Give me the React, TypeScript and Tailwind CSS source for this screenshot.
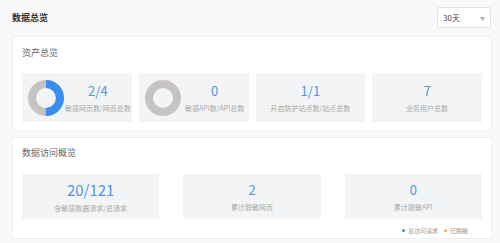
import React from 'react';

const font = { fontFamily: '"Noto Sans CJK SC", "Noto Sans", sans-serif' };

function Donut({ percent }: { percent: number }) {
  const r = 14;
  const c = 2 * Math.PI * r;
  return (
    <svg width="36" height="36" viewBox="0 0 36 36" className="shrink-0">
      <circle cx="18" cy="18" r={r} fill="none" stroke="#c7c3c3" strokeWidth="8" />
      {percent > 0 && (
        <circle
          cx="18"
          cy="18"
          r={r}
          fill="none"
          stroke="#3a8ef2"
          strokeWidth="8"
          strokeDasharray={`${c * percent} ${c}`}
          transform="rotate(-90 18 18)"
        />
      )}
    </svg>
  );
}

function Stat({ value, label, big }: { value: string; label: string; big?: boolean }) {
  return (
    <div className="flex flex-col items-center">
      <div className={`${big ? 'text-[15px]' : 'text-[13px]'} leading-none text-[#5595de]`}>{value}</div>
      <div className="mt-[8px] text-[7px] leading-none text-[#a8a8a8] whitespace-nowrap">{label}</div>
    </div>
  );
}

export default function App() {
  return (
    <div className="w-[500px] h-[243px] bg-[#f9f9fb] overflow-hidden" style={font}>
      {/* Header */}
      <div className="flex items-center justify-between h-[36px] pl-[12px] pr-[9px]">
        <div className="text-[9px] font-bold text-[#333]">数据总览</div>
        <div className="flex items-center justify-between w-[54px] h-[21px] mb-[1px] bg-white border border-[#e4e4e4] rounded-[2px] px-[5px]">
          <span className="text-[8px] text-[#444]">30天</span>
          <span className="text-[5px] text-[#aaa]">▼</span>
        </div>
      </div>

      {/* 资产总览 */}
      <div className="mx-[12px] w-[480px] h-[95px] bg-white border border-[#f0f0f3] rounded-[2px] px-[9px] pt-[11px]">
        <div className="text-[9px] leading-[10px] text-[#666]">资产总览</div>
        <div className="grid grid-cols-4 gap-[7px] mt-[15px]">
          <div className="h-[49px] bg-[#f3f4f6] flex items-center pl-[6px]">
            <Donut percent={0.5} />
            <div className="flex-1 flex justify-center">
              <Stat value="2/4" label="敏感网页数/网页总数" />
            </div>
          </div>
          <div className="h-[49px] bg-[#f3f4f6] flex items-center pl-[6px]">
            <Donut percent={0} />
            <div className="flex-1 flex justify-center">
              <Stat value="0" label="敏感API数/API总数" />
            </div>
          </div>
          <div className="h-[49px] bg-[#f3f4f6] flex items-center justify-center">
            <Stat value="1/1" label="开启防护站点数/站点总数" />
          </div>
          <div className="h-[49px] bg-[#f3f4f6] flex items-center justify-center">
            <Stat value="7" label="业务用户总数" />
          </div>
        </div>
      </div>

      {/* 数据访问概览 */}
      <div className="mx-[12px] mt-[6px] w-[480px] h-[102px] bg-white border border-[#f0f0f3] rounded-[2px] px-[9px] pt-[10px]">
        <div className="text-[9px] leading-[10px] text-[#666]">数据访问概览</div>
        <div className="grid grid-cols-3 gap-[24px] mt-[16px]">
          <div className="h-[45px] bg-[#f3f4f6] flex items-center justify-center">
            <Stat value="20/121" label="含敏感数据请求/总请求" big />
          </div>
          <div className="h-[45px] bg-[#f3f4f6] flex items-center justify-center">
            <Stat value="2" label="累计脱敏网页" />
          </div>
          <div className="h-[45px] bg-[#f3f4f6] flex items-center justify-center">
            <Stat value="0" label="累计脱敏API" />
          </div>
        </div>
        <div className="flex justify-end items-center gap-[6px] mt-[7px] pr-[14px] text-[6px] text-[#999]">
          <div className="flex items-center gap-[3px]">
            <span className="w-[3px] h-[3px] rounded-full bg-[#3a8ef2]" />
            <span>总访问请求</span>
          </div>
          <div className="flex items-center gap-[3px]">
            <span className="w-[3px] h-[3px] rounded-full bg-[#f5b343]" />
            <span>已脱敏</span>
          </div>
        </div>
      </div>
    </div>
  );
}
